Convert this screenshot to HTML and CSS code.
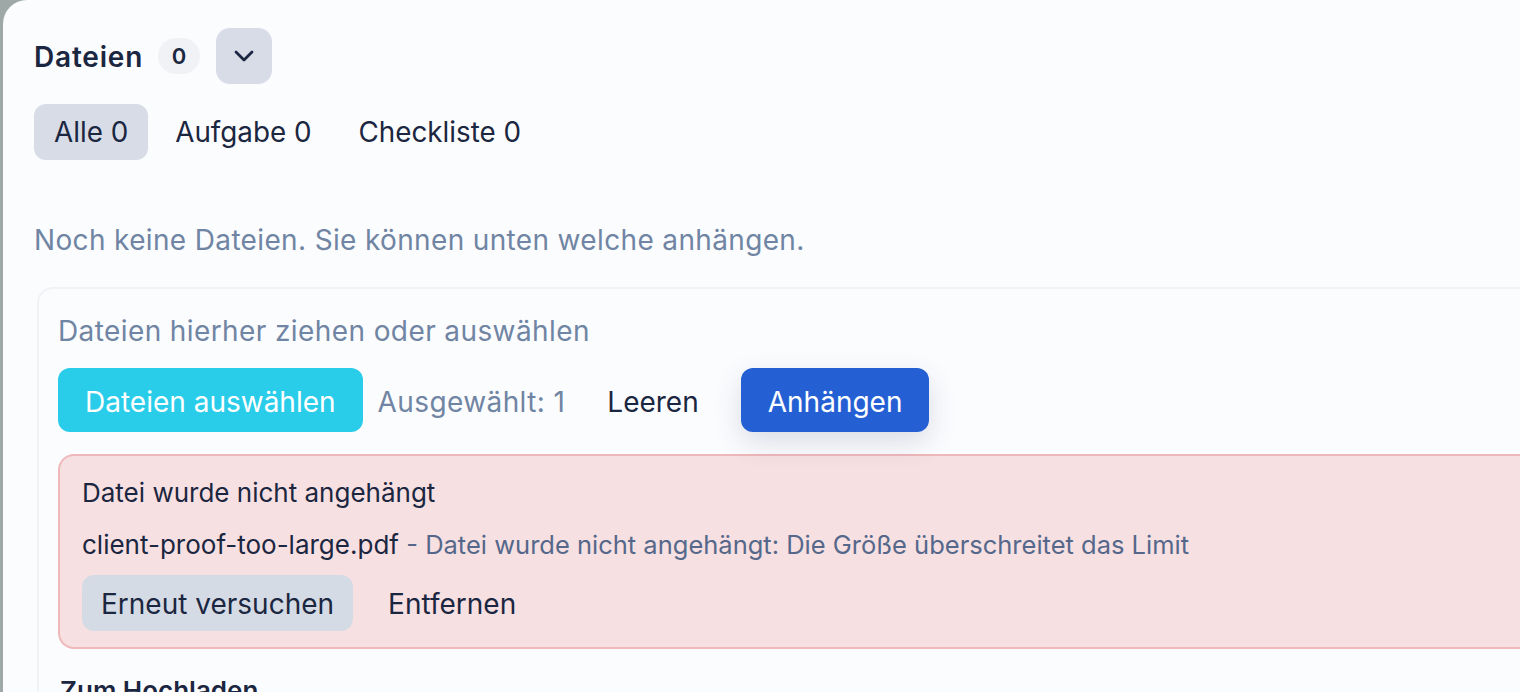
FILE: index.html
```html
<!DOCTYPE html>
<html lang="de">
<head>
    <meta charset="UTF-8">
    <meta name="viewport" content="width=device-width, initial-scale=1.0">
    <title>Dateien</title>
    <link rel="stylesheet" href="styles.css">
</head>
<body>
    <div class="panel">
        <div class="files-header">
            <h2>Dateien</h2>
            <span class="count-badge">0</span>
            <button class="toggle-btn" aria-label="Einklappen">
                <svg width="22" height="14" viewBox="0 0 22 14" fill="none" stroke="currentColor" stroke-width="2.8" stroke-linecap="round" stroke-linejoin="round"><polyline points="3,3 11,11 19,3"/></svg>
            </button>
        </div>

        <div class="tabs">
            <button class="tab active">Alle 0</button>
            <button class="tab">Aufgabe 0</button>
            <button class="tab">Checkliste 0</button>
        </div>

        <p class="empty">Noch keine Dateien. Sie können unten welche anhängen.</p>

        <div class="dropzone">
            <p class="drop-hint">Dateien hierher ziehen oder auswählen</p>
            <div class="actions">
                <button class="btn btn-cyan">Dateien auswählen</button>
                <span class="selected">Ausgewählt: 1</span>
                <button class="btn btn-plain">Leeren</button>
                <button class="btn btn-blue">Anhängen</button>
            </div>

            <div class="error-box">
                <div class="error-title">Datei wurde nicht angehängt</div>
                <div class="error-line">
                    <span class="file-name">client-proof-too-large.pdf</span>
                    <span class="error-msg">- Datei wurde nicht angehängt: Die Größe überschreitet das Limit</span>
                </div>
                <div class="error-actions">
                    <button class="btn-sm btn-gray">Erneut versuchen</button>
                    <button class="btn-sm btn-plain">Entfernen</button>
                </div>
            </div>

            <h3 class="queue-title">Zum Hochladen</h3>
        </div>
    </div>
</body>
</html>
```

FILE: styles.css
```css
html, body {
    margin: 0;
    height: 100%;
}
body {
    background: #9da8a7;
    font-family: Inter, 'Noto Sans', sans-serif;
    color: #1b2640;
    overflow: hidden;
}
button {
    font-family: inherit;
    border: none;
    cursor: pointer;
}
.panel {
    margin-left: 3px;
    height: 100%;
    background: #fbfcfe;
    border-top-left-radius: 24px;
    padding: 28px 0 0 31px;
    box-sizing: border-box;
    overflow: hidden;
}
.files-header {
    display: flex;
    align-items: center;
    height: 56px;
}
.files-header h2 {
    margin: 2px 15px 0 0;
    font-size: 28px;
    font-weight: 600;
    letter-spacing: 0.8px;
}
.count-badge {
    display: inline-flex;
    align-items: center;
    justify-content: center;
    width: 42px;
    height: 36px;
    border-radius: 18px;
    background: #f0f2f6;
    font-size: 22px;
    font-weight: 600;
    margin-right: 16px;
}
.toggle-btn {
    width: 56px;
    height: 56px;
    border-radius: 14px;
    background: #d7dce7;
    color: #1b2640;
    display: flex;
    align-items: center;
    justify-content: center;
    padding: 0;
}
.tabs {
    display: flex;
    gap: 7px;
    margin-top: 20px;
}
.tab {
    height: 56px;
    padding: 0 20px;
    border-radius: 12px;
    background: transparent;
    color: #1b2640;
    font-size: 27.8px;
}
.tab.active {
    background: #d7dce7;
}
.empty {
    margin: 60px 0 0;
    line-height: 40px;
    font-size: 28px;
    letter-spacing: 0.35px;
    color: #7085a3;
}
.dropzone {
    margin: 27px -60px 0 3px;
    border: 2px solid #f0f2f6;
    border-right: none;
    border-radius: 16px 0 0 0;
    padding: 22px 0 0 19px;
}
.drop-hint {
    margin: 0;
    line-height: 40px;
    font-size: 28px;
    letter-spacing: 0.4px;
    color: #7085a3;
}
.actions {
    display: flex;
    align-items: center;
    gap: 15px;
    margin-top: 17px;
}
.btn {
    height: 64px;
    padding: 0 27px;
    border-radius: 12px;
    font-size: 28px;
    line-height: 1;
    padding-top: 3px;
}
.btn-cyan {
    background: #29cdea;
    color: #fff;
}
.btn-blue {
    background: #2460d4;
    color: #fff;
    box-shadow: 0 10px 28px rgba(40, 55, 90, 0.16);
}
.btn-plain {
    background: transparent;
    color: #1b2640;
}
.selected {
    font-size: 28px;
    letter-spacing: 0.4px;
    color: #7085a3;
    padding-top: 3px;
}
.error-box {
    margin-top: 22px;
    background: #f7e0e1;
    border: 2px solid #efb8ba;
    border-right: none;
    border-radius: 16px 0 0 16px;
    padding: 19px 0 16px 22px;
}
.error-title {
    font-size: 26px;
    line-height: 36px;
}
.error-line {
    margin-top: 16px;
    line-height: 36px;
    font-size: 26px;
}
.error-msg {
    color: #55688b;
    font-size: 25.5px;
}
.error-actions {
    display: flex;
    gap: 16px;
    margin-top: 12px;
}
.btn-sm {
    height: 56px;
    padding: 2px 19px 0;
    border-radius: 12px;
    font-size: 28px;
    color: #1b2640;
}
.btn-gray {
    background: #d5dbe5;
}
.queue-title {
    margin: 26px 0 0 2px;
    font-size: 26px;
    font-weight: 600;
}
```
